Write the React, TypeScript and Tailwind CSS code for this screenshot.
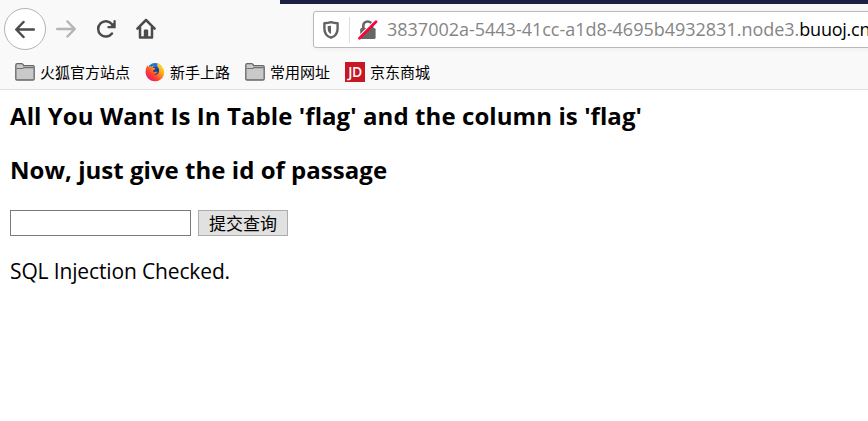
import React from "react";

const ui = "font-['Open_Sans','Noto_Sans_CJK_SC',sans-serif]";

function Folder() {
  return (
    <svg width="20" height="20" viewBox="0 0 20 20" className="shrink-0">
      <path d="M.8 16.800V3.200c0-1 .6-1.600 1.500-1.600h4.200c1 0 1.500.5 1.800 1.200l.4.9h9.200c.9 0 1.300.6 1.300 1.300v11.800c0 .8-.4 1.200-1.200 1.200H2c-.8 0-1.200-.4-1.200-1.200Z" fill="#c9c9c9" stroke="#666" strokeWidth="1.300" />
      <path d="M1.500 6.500h6.300l1.200-.9h9.600" fill="none" stroke="#727272" strokeWidth="1.100" />
    </svg>
  );
}

function Firefox() {
  return (
    <svg width="20" height="20" viewBox="0 0 20 20" className="shrink-0">
      <defs>
        <linearGradient id="fox" x1="0.9" y1="0.1" x2="0.2" y2="0.9">
          <stop offset="0" stopColor="#ffe52b" />
          <stop offset="0.35" stopColor="#ffa818" />
          <stop offset="0.68" stopColor="#ff4a28" />
          <stop offset="1" stopColor="#f0146c" />
        </linearGradient>
      </defs>
      <circle cx="10" cy="8.600" r="7.600" fill="#1673e0" />
      <circle cx="10.200" cy="9.800" r="4.800" fill="#1d3f9e" />
      <path d="M13 .6c.8 1.800 3.600 3 4.900 5.200 2.100 3.600 1.500 8.200-1.400 11-3.500 3.300-9.300 3.400-12.700.3C.9 14.500-.1 10.400 1 7c.2-1.300.9-2.700 1.900-3.700L3.200 5c1-.8 2.300-.9 3.500-.3.900-.8 1.700-1 2.600-1.100-.9.7-1.400 1.500-1.500 2.200.8.400 1.900.1 2.600.6-.3 1.200-1.900 1.300-2.300 2.200-.2 1 .6 1.500 1.500 1.400 1-.1 1.700-.6 2.700.2-.8 1.500-2.300 2-4 1.500 2 1.900 5 .9 5.600-1.600.6-2.100.1-3.700-.9-4.900C11.800 3.800 12 2 13 .6Z" fill="url(#fox)" />
    </svg>
  );
}

function Bookmark({ icon, label, className }: { icon: React.ReactNode; label: string; className: string }) {
  return (
    <div className={`flex items-center gap-[5px] whitespace-nowrap ${className}`}>
      {icon}
      <span className="text-[15px] leading-5 text-black">{label}</span>
    </div>
  );
}

function Toolbar() {
  return (
    <div className="flex h-[51px] shrink-0 overflow-hidden">
      <div className="mt-[4px] ml-1 flex size-[42px] shrink-0 items-center justify-center rounded-full border border-[#b4b4b4] bg-white">
        <svg width="20" height="20" viewBox="0 0 20 20" fill="none" stroke="#4b4b4b" strokeWidth="2.500" strokeLinecap="round" strokeLinejoin="round">
          <path d="M18.800 10.500H1.500M8.500 3 1.300 10.500 8.500 18" />
        </svg>
      </div>
      <svg className="mt-[15px] ml-[10px] shrink-0" width="20" height="20" viewBox="0 0 20 20" fill="none" stroke="#b5b5b5" strokeWidth="2.500" strokeLinecap="round" strokeLinejoin="round">
        <path d="M1.200 10h17.300M11.500 2.500l7.200 7.500-7.200 7.500" />
      </svg>
      <svg className="mt-[15px] ml-[20px] shrink-0" width="21" height="20" viewBox="0 0 21 20" fill="none" stroke="#4b4b4b" strokeWidth="2.500" strokeLinecap="round" strokeLinejoin="round">
        <path d="M16 14.500A7.700 7.700 0 1 1 15.800 5" />
        <path d="M18.600 2v6.200h-6.200" strokeWidth="2.200" strokeLinejoin="miter" />
        <path d="m13.500 8 5-5v5Z" fill="#4b4b4b" stroke="none" />
      </svg>
      <svg className="mt-[14px] ml-[19px] shrink-0" width="20" height="21" viewBox="0 0 20 21" fill="none" stroke="#4b4b4b" strokeWidth="2.500" strokeLinecap="round" strokeLinejoin="round">
        <path d="m1.400 10.600 8.600-8.600 8.600 8.600M4 9.200v10.200h12V9.200" />
        <path d="M8.900 18.500v-6h2.200v6" strokeWidth="2.200" />
      </svg>
      <div className="mt-[7px] ml-[157px] flex h-[37px] w-[620px] shrink-0 items-center rounded-[3px] border border-[#bababc] bg-white shadow-[0_1px_4px_rgba(0,0,0,0.05)]">
        <svg className="ml-[9px] shrink-0" width="16" height="20" viewBox="0 0 16 20">
          <path d="M8 2.200C5.800 3 3.600 3.200 1.400 3.200v5.500c0 4.500 2.500 7.600 6.600 9 4.100-1.400 6.600-4.500 6.600-9V3.200C12.400 3.200 10.200 3 8 2.200Z" fill="none" stroke="#626262" strokeWidth="2.400" strokeLinejoin="round" />
          <path d="M8 5.500v8.500C5.800 12.800 4.700 11.300 4.700 8.700V6.100C5.900 6 7 5.900 8 5.500Z" fill="#626262" />
        </svg>
        <div className="ml-[10px] h-[26px] w-px bg-[#dedee0]" />
        <svg className="ml-[8px] shrink-0" width="20" height="20" viewBox="0 0 20 20">
          <path d="M5.300 9V5.900a4.400 4.400 0 0 1 8.800 0V9" fill="none" stroke="#666" strokeWidth="2.700" />
          <rect x="2.200" y="8" width="15.400" height="11" rx="1.500" fill="#666" />
          <path d="M1.500 15.800 15.800 1.500" stroke="#fff" strokeWidth="1.500" />
          <path d="M1.500 18.300 18 1.800" stroke="#ff0039" strokeWidth="2.700" strokeLinecap="round" />
        </svg>
        <div className="ml-[9px] text-[18px] tracking-[-0.01px] whitespace-nowrap text-[#858585]">
          3837002a-5443-41cc-a1d8-4695b4932831.node3.<span className="tracking-[-0.25px] text-black">buuoj.cn</span>
        </div>
      </div>
    </div>
  );
}

export default function App() {
  return (
    <div className={`flex h-[421px] w-[868px] flex-col overflow-hidden bg-white ${ui}`}>
      <header className="flex h-[90px] shrink-0 flex-col overflow-hidden border-b border-[#e0e0e1] bg-[#f9f9fa]">
        <div className="ml-[280px] h-1 shrink-0 bg-[#1d2042]" />
        <Toolbar />
        <nav className="flex h-[34px] items-center pl-[15px]">
          <Bookmark className="w-[130px]" icon={<Folder />} label="火狐官方站点" />
          <Bookmark className="w-[100px]" icon={<Firefox />} label="新手上路" />
          <Bookmark className="w-[100px]" icon={<Folder />} label="常用网址" />
          <Bookmark
            className="w-[100px]"
            icon={<span className="flex size-5 shrink-0 items-center justify-center bg-[#c81623] text-[14px] leading-none font-semibold tracking-[-0.5px] text-white">JD</span>}
            label="京东商城"
          />
        </nav>
      </header>
      <main className="flex flex-col items-start pl-[10px] text-black">
        <h3 className="mt-[8px] text-[24px] leading-9 font-bold tracking-[0.08px] whitespace-nowrap">All You Want Is In Table 'flag' and the column is 'flag'</h3>
        <h3 className="mt-[18px] text-[24px] leading-9 font-bold tracking-[0.03px] whitespace-nowrap">Now, just give the id of passage</h3>
        <form className="mt-[22px] flex gap-[7px]" onSubmit={(e) => e.preventDefault()}>
          <input aria-label="id" className="h-[26px] w-[181px] border border-[#7a7a7a] bg-white px-1 outline-none" />
          <button className="flex h-[26px] w-[90px] items-center justify-center border border-[#adadad] bg-[#e1e1e1] text-[17px] leading-none whitespace-nowrap">提交查询</button>
        </form>
        <p className="mt-[20px] text-[21px] leading-[30px] tracking-[-0.14px] whitespace-nowrap">SQL Injection Checked.</p>
      </main>
    </div>
  );
}
